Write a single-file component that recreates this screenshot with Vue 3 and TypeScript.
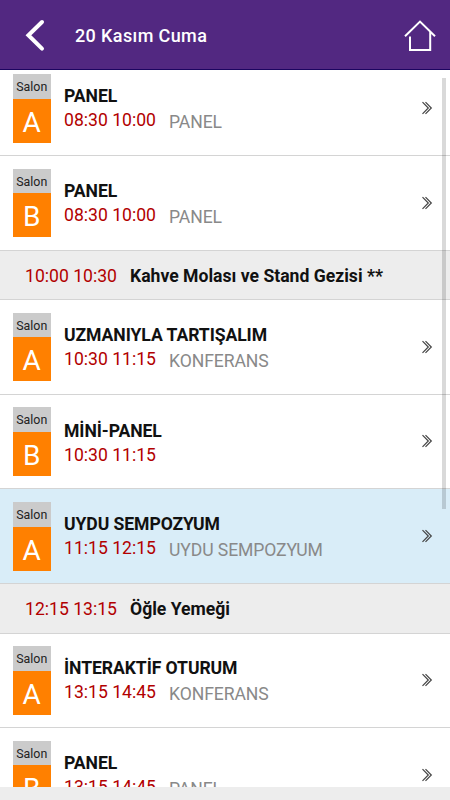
<script setup lang="ts">
interface Entry {
  kind: 'session' | 'break'
  time: string
  title: string
  hall?: string
  type?: string
  highlighted?: boolean
}

const entries: Entry[] = [
  { kind: 'session', hall: 'A', title: 'PANEL', time: '08:30 10:00', type: 'PANEL' },
  { kind: 'session', hall: 'B', title: 'PANEL', time: '08:30 10:00', type: 'PANEL' },
  { kind: 'break', title: 'Kahve Molası ve Stand Gezisi **', time: '10:00 10:30' },
  { kind: 'session', hall: 'A', title: 'UZMANIYLA TARTIŞALIM', time: '10:30 11:15', type: 'KONFERANS' },
  { kind: 'session', hall: 'B', title: 'MİNİ-PANEL', time: '10:30 11:15' },
  { kind: 'session', hall: 'A', title: 'UYDU SEMPOZYUM', time: '11:15 12:15', type: 'UYDU SEMPOZYUM', highlighted: true },
  { kind: 'break', title: 'Öğle Yemeği', time: '12:15 13:15' },
  { kind: 'session', hall: 'A', title: 'İNTERAKTİF OTURUM', time: '13:15 14:45', type: 'KONFERANS' },
  { kind: 'session', hall: 'B', title: 'PANEL', time: '13:15 14:45', type: 'PANEL' },
]
</script>

<template>
  <div class="screen">
    <header class="bar">
      <svg class="back" viewBox="0 0 22 36" width="22" height="36">
        <path d="M18 5 4.4 18.3 18 31.6" />
      </svg>
      <h1 class="date">20 Kasım Cuma</h1>
      <svg class="home" viewBox="0 0 34 34" width="34" height="34">
        <path d="M2 18.3 17 3.6 32 18.3M7 18.5V32H27.2V14" />
      </svg>
    </header>

    <main class="viewport">
      <div class="list">
        <template v-for="(e, i) in entries" :key="i">
          <div v-if="e.kind === 'break'" class="row break">
            <span class="time">{{ e.time }}</span>
            <span class="title">{{ e.title }}</span>
          </div>
          <div v-else class="row session" :class="{ highlighted: e.highlighted, untyped: !e.type }">
            <div class="hall">
              <div class="hall-label">Salon</div>
              <div class="hall-name">{{ e.hall }}</div>
            </div>
            <div class="info">
              <div class="title">{{ e.title }}</div>
              <div class="meta">
                <span class="time">{{ e.time }}</span>
                <span v-if="e.type" class="type">{{ e.type }}</span>
              </div>
            </div>
            <svg class="more" viewBox="0 0 12 14" width="12" height="14">
              <path d="M1.5 1.2 7.3 7 1.5 12.8M4.5 1.2 10.3 7 4.5 12.8" />
            </svg>
          </div>
        </template>
      </div>
      <div class="scrollbar"></div>
    </main>
    <footer class="bottom"></footer>
  </div>
</template>

<style>
body {
  margin: 0;
  overflow: hidden;
}
</style>

<style scoped>
.screen {
  display: flex;
  flex-direction: column;
  width: 450px;
  height: 800px;
  font-family: Roboto, sans-serif;
  background: #fff;
}
.bar {
  display: flex;
  align-items: center;
  flex: none;
  box-sizing: border-box;
  height: 70px;
  padding: 0 13px 0 24px;
  background: #522881;
  border-bottom: 1px solid #1c0560;
}
.back path {
  fill: none;
  stroke: #fff;
  stroke-width: 4;
  stroke-linecap: round;
}
.date {
  flex: 1;
  margin: 2px 0 0 29px;
  color: #fff;
  font-size: 18px;
  font-weight: 500;
  line-height: 24px;
  letter-spacing: 0.38px;
}
.home path {
  fill: none;
  stroke: #fff;
  stroke-width: 2;
}
.viewport {
  position: relative;
  flex: 1;
  min-height: 0;
  overflow: hidden;
}
.list {
  margin-top: -8.6px;
}
.row {
  display: flex;
  box-sizing: border-box;
  border-bottom: 1px solid #d4d4d4;
}
.session {
  height: 94.6px;
  padding: 12.7px 17px 0 12.5px;
}
.highlighted {
  background: #d9edf8;
}
.break {
  height: 49.6px;
  align-items: center;
  gap: 13px;
  padding: 2px 0 0 25px;
  background: #ededed;
}
.hall {
  width: 38.5px;
  height: 68.6px;
  display: flex;
  flex-direction: column;
  text-align: center;
}
.hall-label {
  flex: none;
  height: 24.6px;
  background: #cbcbcb;
  color: #222;
  font-size: 12.4px;
  line-height: 25px;
}
.hall-name {
  height: 44px;
  background: #ff8000;
  color: #fff;
  font-size: 28px;
  line-height: 47px;
}
.info {
  flex: 1;
  margin-left: 13px;
  padding-top: 10px;
}
.title {
  color: #111;
  font-size: 17.6px;
  font-weight: 700;
  line-height: 24px;
}
.info .title {
  letter-spacing: -0.08px;
}
.meta {
  display: flex;
  gap: 13px;
}
.time {
  color: #b20000;
  font-size: 17.6px;
  line-height: 24px;
}
.type {
  margin-top: 2px;
  color: #898989;
  font-size: 17.6px;
  line-height: 24px;
  letter-spacing: -0.1px;
}
.untyped .info {
  padding-top: 11.2px;
}
.more {
  margin-top: 27px;
}
.more path {
  fill: none;
  stroke: #444;
  stroke-width: 1.2;
}
.scrollbar {
  position: absolute;
  top: 8px;
  right: 4px;
  width: 4px;
  height: 431px;
  background: rgba(0, 0, 0, 0.15);
}
.bottom {
  flex: none;
  height: 13px;
  background: #ededed;
}
</style>
